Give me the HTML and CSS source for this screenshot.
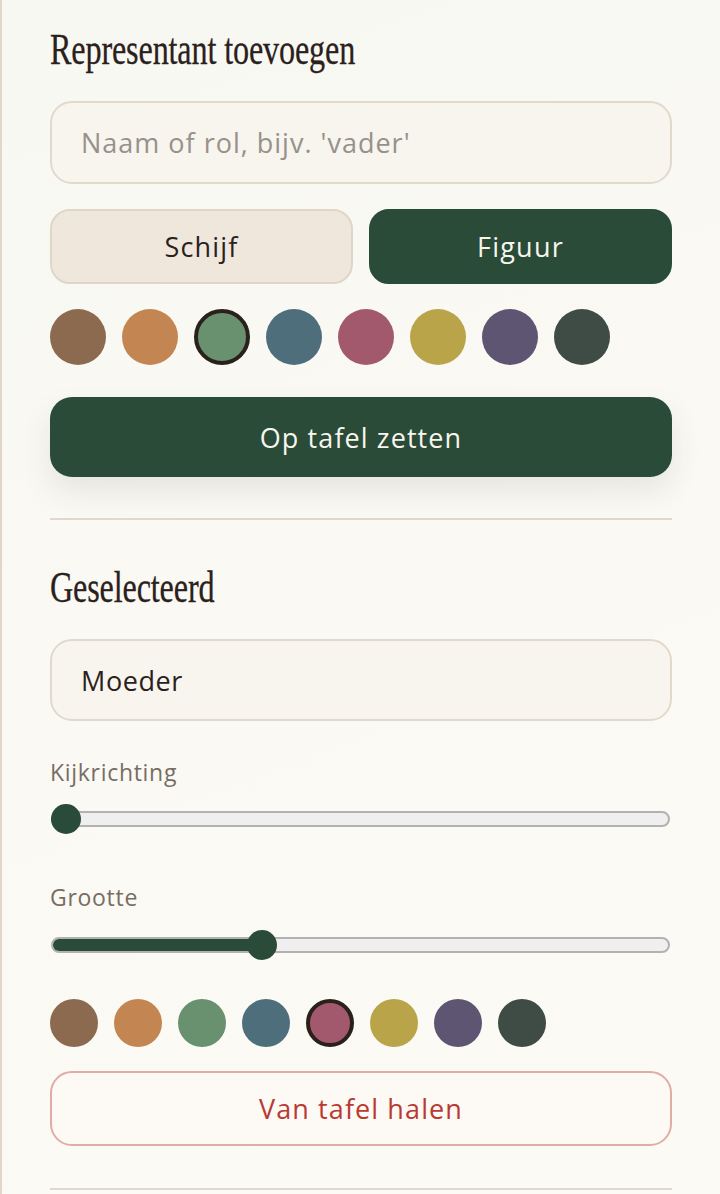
FILE: index.html
```html
<!DOCTYPE html>
<html lang="nl">
<head>
<meta charset="utf-8">
<title>Representant toevoegen</title>
<link rel="stylesheet" href="styles.css">
</head>
<body>
<div class="panel">
  <section class="section">
    <h2 class="title"><span class="title-text">Representant toevoegen</span></h2>
    <div class="field field-add"><span class="placeholder">Naam of rol, bijv. 'vader'</span></div>
    <div class="toggle">
      <button class="toggle-btn">Schijf</button>
      <button class="toggle-btn is-active">Figuur</button>
    </div>
    <div class="swatches swatches-lg">
      <span class="swatch c1"></span>
      <span class="swatch c2"></span>
      <span class="swatch c3 is-selected"></span>
      <span class="swatch c4"></span>
      <span class="swatch c5"></span>
      <span class="swatch c6"></span>
      <span class="swatch c7"></span>
      <span class="swatch c8"></span>
    </div>
    <button class="primary">Op tafel zetten</button>
  </section>
  <hr class="divider divider-1">
  <section class="section">
    <h2 class="title title-2"><span class="title-text">Geselecteerd</span></h2>
    <div class="field field-sel"><span class="value">Moeder</span></div>
    <div class="label label-1">Kijkrichting</div>
    <div class="slider slider-1">
      <div class="track"><div class="fill" style="width:0px"></div></div>
      <span class="thumb" style="left:1px"></span>
    </div>
    <div class="label label-2">Grootte</div>
    <div class="slider slider-2">
      <div class="track"><div class="fill" style="width:212px"></div></div>
      <span class="thumb" style="left:197px"></span>
    </div>
    <div class="swatches swatches-sm">
      <span class="swatch c1"></span>
      <span class="swatch c2"></span>
      <span class="swatch c3"></span>
      <span class="swatch c4"></span>
      <span class="swatch c5 is-selected"></span>
      <span class="swatch c6"></span>
      <span class="swatch c7"></span>
      <span class="swatch c8"></span>
    </div>
    <button class="danger">Van tafel halen</button>
  </section>
  <hr class="divider divider-2">
</div>
</body>
</html>
```

FILE: styles.css
```css
html, body {
  margin: 0;
  padding: 0;
}
body {
  background: #f9f8f3;
  font-family: "Open Sans", "Liberation Sans", sans-serif;
  color: #2b211c;
}
.panel {
  border-left: 2px solid #e0d7cc;
  min-height: 1194px;
  box-sizing: border-box;
  padding: 0 48px 0 48px;
  background: linear-gradient(160deg, #f8f8f3 0%, #faf9f4 50%, #fcfaf5 100%);
}
.section {
  display: flex;
  flex-direction: column;
}
.title {
  margin: 0;
  font-family: "Liberation Serif", "Times New Roman", serif;
  font-weight: normal;
  font-size: 45px;
  line-height: 52px;
  color: #2b211c;
  padding-top: 23px;
  white-space: nowrap;
}
.title-text {
  display: inline-block;
  transform: scaleX(0.715);
  transform-origin: left center;
  letter-spacing: -0.2px;
  -webkit-text-stroke: 0.3px #2b211c;
}
.title-2 {
  padding-top: 41px;
}
.field {
  box-sizing: border-box;
  height: 83px;
  border: 2px solid #e2d9cd;
  border-radius: 22px;
  background: #f8f4ee;
  display: flex;
  align-items: center;
  padding-left: 29px;
  font-size: 27px;
}
.field-add {
  margin-top: 26px;
}
.field-sel {
  margin-top: 26px;
  height: 82px;
}
.placeholder {
  color: #96918a;
  letter-spacing: 1px;
}
.value {
  color: #2b211c;
  letter-spacing: 0.6px;
}
.toggle {
  display: grid;
  grid-template-columns: 1fr 1fr;
  gap: 16px;
  margin-top: 25px;
}
.toggle-btn {
  box-sizing: border-box;
  height: 75px;
  border-radius: 20px;
  border: 2px solid #e0d6c8;
  background: #efe7dc;
  font-family: inherit;
  font-size: 27px;
  color: #2b211c;
  letter-spacing: 1.2px;
  padding: 0;
}
.toggle-btn.is-active {
  background: #294b37;
  border-color: #294b37;
  color: #f8f5ee;
}
.swatches {
  display: flex;
  gap: 16px;
}
.swatches-lg {
  margin-top: 25px;
}
.swatches-lg .swatch {
  width: 56px;
  height: 56px;
}
.swatches-sm {
  margin-top: 39px;
}
.swatches-sm .swatch {
  width: 48px;
  height: 48px;
}
.swatch {
  box-sizing: border-box;
  border-radius: 50%;
  display: block;
}
.swatch.is-selected {
  border: 4px solid #2a211b;
}
.c1 { background: #8b6a4f; }
.c2 { background: #c38652; }
.c3 { background: #699170; }
.c4 { background: #4f6e7c; }
.c5 { background: #a3596d; }
.c6 { background: #b9a44a; }
.c7 { background: #5d5571; }
.c8 { background: #3f4b45; }
.primary {
  margin-top: 32px;
  height: 80px;
  border: none;
  border-radius: 22px;
  background: #294b37;
  color: #f8f5ee;
  font-family: inherit;
  font-size: 27px;
  font-weight: 500;
  letter-spacing: 1.1px;
  box-shadow: 0 14px 30px rgba(60, 60, 40, 0.10);
}
.divider {
  border: none;
  height: 2px;
  background: #e0d8cc;
  margin: 0;
}
.divider-1 {
  margin-top: 41px;
}
.divider-2 {
  margin-top: 42px;
}
.label {
  font-size: 23px;
  color: #786d63;
  letter-spacing: 0.7px;
  line-height: 30px;
}
.label-1 {
  margin-top: 36px;
}
.label-2 {
  margin-top: 48px;
}
.slider {
  position: relative;
  height: 30px;
  display: flex;
  align-items: center;
}
.slider-1 {
  margin-top: 17px;
}
.slider-2 {
  margin-top: 18px;
}
.track {
  box-sizing: border-box;
  margin-left: 1px;
  width: 619px;
  height: 16px;
  border: 2px solid #b2b2b2;
  border-radius: 8px;
  background: #efefef;
  overflow: hidden;
}
.fill {
  height: 100%;
  background: #294b37;
}
.thumb {
  position: absolute;
  top: 0;
  width: 30px;
  height: 30px;
  border-radius: 50%;
  background: #294b37;
}
.danger {
  margin-top: 24px;
  box-sizing: border-box;
  height: 75px;
  border: 2px solid #e1aca4;
  border-radius: 22px;
  background: #fdf9f4;
  color: #b93a32;
  font-family: inherit;
  font-size: 27px;
  letter-spacing: 1.1px;
}
```
